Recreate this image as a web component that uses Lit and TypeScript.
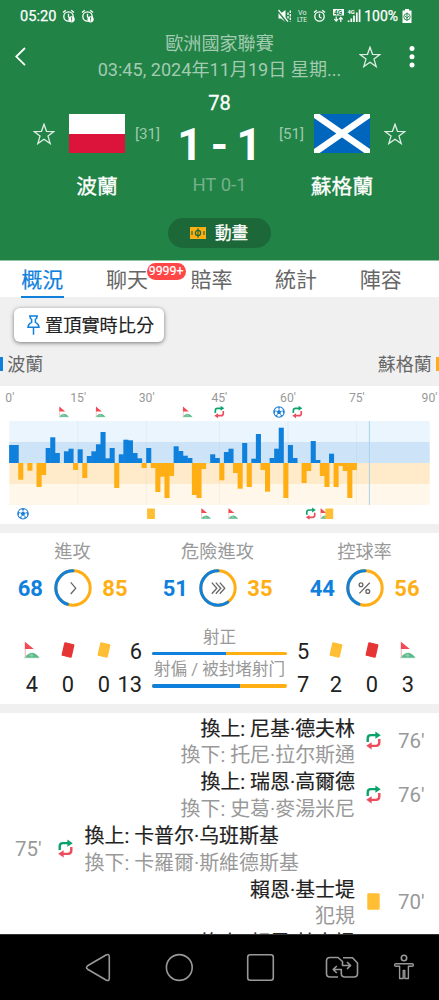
import { LitElement, html, svg, css } from "lit";
import { customElement, property } from "lit/decorators.js";

const BLUE = "#0f80dc";
const AMBER = "#ffae13";

/* Pressure per minute slot: positive is the home side, negative the away side. */
const PRESSURE = [
  18, 18, -16.7, 0, -7.7, 0, -24, -12, 15, 25.7, 10, 0, 11.7, 14.3, -7, 13.7, -15,
  7, 11.7, 18.7, 31, 4.7, 15, -25, 8.7, 23.3, 22.7, 10, 4.7, -5, 15, -5, -29,
  -13.7, -35, -13, 16.7, 12, 7.3, 5, -32, -35, -6, 0, 8.7, 5, -17.3, 11, 14.3,
  -10, -25.7, 20, -24, 4.3, 29, -7, -28.7, 5, 14.3, 35.3, -35, 18, 5, 0, -20,
  -8, 22, 3, -13, -24, 9.3, -24, -3, -8, -35, -7,
];
const SLOT = 4.57;

type Kind = "flag" | "swap" | "ball" | "yellow" | "red";
const MARKERS: [Kind, number, number][] = [
  ["flag", 64, 412], ["flag", 100.6, 412], ["flag", 187.6, 412],
  ["swap", 219.3, 412], ["ball", 279, 412], ["swap", 297.3, 412],
  ["ball", 23, 513.7], ["yellow", 151, 513.7], ["flag", 206, 513.7],
  ["flag", 233.2, 513.7], ["swap", 310.8, 513.7], ["flag", 325.3, 513.7],
  ["yellow", 329.3, 513.7],
];
const TICKS: [string, number][] = [
  ["0'", 9.8], ["15'", 78.2], ["30'", 146.7], ["45'", 219.3],
  ["60'", 288], ["75'", 356.8], ["90'", 429.5],
];

const flag = () => svg`
  <path d="M2 20 L4.5 16.5 L12 14.2 L19.6 20 Z" fill="#a9dcc2"/>
  <path d="M3.6 19.2 Q10.5 8.6 19.2 19.2 Z" fill="#5cb98a"/>
  <path d="M7.5 16.5 l3 -1.6 2.3 1.8 -2 1.9z" fill="#8ccdac"/>
  <path d="M3.6 2.4 V19" stroke="#f2b6ba" stroke-width="1.2"/>
  <path d="M3.2 1.8 L13 10 H3.2 Z" fill="#f14b55"/>`;
const swap = () => svg`
  <path d="M4.3 12.6 V8.6 Q4.3 4.8 8 4.8 H14" fill="none" stroke="#0ba26c" stroke-width="2.8"/>
  <path d="M13.2 .6 L19.4 4.8 L13.2 9 Z" fill="#0ba26c"/>
  <path d="M17.7 9.4 V13.4 Q17.7 17.2 14 17.2 H8" fill="none" stroke="#ec4c5c" stroke-width="2.8"/>
  <path d="M8.8 13 L2.6 17.2 L8.8 21.4 Z" fill="#ec4c5c"/>`;
const ball = () => svg`
  <circle cx="11" cy="11" r="9.6" fill="#fff" stroke="#1b7fd6" stroke-width="1.9"/>
  <path d="M11 7 L15 9.9 L13.5 14.6 H8.5 L7 9.9 Z" fill="#1b7fd6"/>
  <path d="M11 7 V3 M15 9.9 L19 8.5 M13.5 14.6 L16 18 M8.5 14.6 L6 18 M7 9.9 L3 8.5" stroke="#1b7fd6" stroke-width="1.5"/>
  <path d="M7.2 2.2 L11 4.6 L14.8 2.2z M1.8 8 L4.2 9.4 L3.4 13.8 L1.6 13z M20.2 8 L17.8 9.4 L18.6 13.8 L20.4 13z M4.6 17 L8 16.8 L8.6 20z M17.4 17 L14 16.8 L13.4 20z" fill="#1b7fd6"/>`;
const card = (fill: string) => svg`<rect x="3.8" y="1.4" width="14.4" height="19.2" rx="1.4" fill=${fill}/>`;
const glyph = (k: Kind) =>
  k === "flag" ? flag() : k === "swap" ? swap() : k === "ball" ? ball() : card(k === "red" ? "#e53535" : "#ffbe33");

@customElement("event-icon")
class EventIcon extends LitElement {
  @property() kind: Kind = "swap";
  @property({ type: Number }) size = 19;
  static styles = css`:host { display: inline-flex } svg { display: block }`;
  render() {
    return html`<svg width=${this.size} height=${this.size} viewBox="0 0 22 22">${glyph(this.kind)}</svg>`;
  }
}

@customElement("stat-ring")
class StatRing extends LitElement {
  @property() label = "";
  @property() icon = "";
  @property({ type: Number }) home = 0;
  @property({ type: Number }) away = 0;
  static styles = css`
    :host { display: flex; flex-direction: column; align-items: center; width: 145px; flex: none }
    .label { height: 34.5px; line-height: 37px; font-size: 18.2px; color: #999; white-space: nowrap }
    .row { display: flex; align-items: center; gap: 10.8px; height: 41px; font-size: 22px; font-weight: 700 }
    span { padding-top: 1px }
    .home { color: #0f80dc; width: 25px; text-align: right }
    .away { color: #ffae13; width: 25px }
    svg { display: block }
  `;
  render() {
    const r = 17.2;
    const c = 2 * Math.PI * r;
    const part = (this.home / (this.home + this.away)) * c;
    const icon =
      this.icon === "one" ? svg`<path d="M16.7 13.4 L21.7 19.2 L16.7 25"/>`
      : this.icon === "three"
        ? svg`<path d="M12.8 13.6 L17.8 19.2 L12.8 24.8 M16.8 13.6 L21.8 19.2 L16.8 24.8 M20.8 13.6 L25.8 19.2 L20.8 24.8"/>`
        : svg`<circle cx="15" cy="15.8" r="1.9"/><circle cx="21.8" cy="22.4" r="1.9"/><path d="M23.8 13.8 L13.4 24.4"/>`;
    return html`
      <div class="label">${this.label}</div>
      <div class="row">
        <span class="home">${this.home}</span>
        <svg width="38" height="38" viewBox="0 0 38 38" fill="none">
          <circle cx="19" cy="19" r=${r} stroke=${AMBER} stroke-width="3"/>
          <circle cx="19" cy="19" r=${r} stroke=${BLUE} stroke-width="3" stroke-linecap="round"
            stroke-dasharray="${part} ${c}" transform="matrix(0 -1 -1 0 38 38)"/>
          <g stroke="#666" stroke-width="1.3">${icon}</g>
        </svg>
        <span class="away">${this.away}</span>
      </div>`;
  }
}

@customElement("pressure-chart")
class PressureChart extends LitElement {
  static styles = css`
    :host { display: block; height: 138px; background: #fff }
    svg { display: block }
    text { font-size: 12.2px; fill: #999; text-anchor: middle }
  `;
  render() {
    return html`<svg width="439" height="138" viewBox="0 386 439 138">
      ${TICKS.map(([t, x]) => svg`<text x=${x} y="402.3">${t}</text>`)}
      <rect x="9.3" y="421" width="420.4" height="21" fill="#eaf5fd"/>
      <rect x="9.3" y="442" width="420.4" height="21" fill="#cce3f8"/>
      <rect x="9.3" y="463" width="420.4" height="21" fill="#ffebc9"/>
      <rect x="9.3" y="484" width="420.4" height="21" fill="#fff7e9"/>
      ${[77.8, 146.4, 219.5, 288, 356.6].map((x) => svg`<path d="M${x} 421 V505" stroke="#8899aa" stroke-opacity=".08"/>`)}
      ${PRESSURE.map((v, i) => v === 0 ? null : svg`
        <rect x=${9.3 + SLOT * i - 0.2} y=${v > 0 ? 463 - v : 463} width=${SLOT + 0.5} height=${Math.abs(v)}
          fill=${v > 0 ? BLUE : AMBER}/>`)}
      <path d="M369.4 421 V505" stroke="#a9d2ee" stroke-width="1"/>
      ${MARKERS.map(([k, x, y]) => {
        const s = k === "flag" || k === "swap" ? 13 : 12;
        return svg`<g transform="translate(${x - s / 2} ${y - s / 2}) scale(${s / 22})">${glyph(k)}</g>`;
      })}
    </svg>`;
  }
}

@customElement("match-event")
class MatchEvent extends LitElement {
  @property() side = "away";
  @property() main = "";
  @property() sub = "";
  @property() minute = "";
  @property() kind: Kind = "swap";
  static styles = css`
    :host { display: block; height: 53.7px; flex: none }
    .row { display: flex; height: 100%; align-items: center; padding: 0 14px 0 15px; flex-direction: row }
    .away { flex-direction: row-reverse; text-align: right }
    .minute { width: 41px; font-size: 20.5px; color: #999; flex: none; text-align: left; padding-top: 1px }
    .away .minute { width: 27px; margin-left: 14px; padding-left: 1px }
    event-icon { margin-right: 9.5px; flex: none }
    .away event-icon { margin-right: 0; margin-left: 9px }
    .text { font-size: 19.95px; line-height: 26.8px; white-space: nowrap; height: 53.6px; margin-top: 3px }
    .main { color: #222; -webkit-text-stroke: .2px #222 }
    .sub { color: #999 }
  `;
  render() {
    return html`<div class="row ${this.side}">
      <div class="minute">${this.minute}</div>
      <event-icon .kind=${this.kind}></event-icon>
      <div class="text"><div class="main">${this.main}</div><div class="sub">${this.sub}</div></div>
    </div>`;
  }
}

const star = html`<svg width="22" height="22" viewBox="0 0 22 22" fill="none" stroke="#dfeee4" stroke-width="1.3">
  <path d="M11 1.2 L13.5 8.3 L21 8.5 L15 13.1 L17.2 20.6 L11 16.3 L4.8 20.6 L7 13.1 L1 8.5 L8.5 8.3 Z"/></svg>`;
const alarmBody = svg`<circle cx="6.5" cy="7.5" r="4.7"/><path d="M6.5 4.8 V8 L8.6 9.3 M1 3.6 L3.8 1.2 M12 3.6 L9.2 1.2"/>`;
const alarmAlert = html`<svg width="13" height="14" viewBox="0 0 13 14" fill="none" stroke="#fff" stroke-width="1.3">
  ${alarmBody}<circle cx="9.6" cy="10.3" r="3.1" fill="#fff" stroke="none"/><path d="M9.6 8.3 V10.8 M9.6 11.5 V12.4" stroke="#218346" stroke-width="1"/></svg>`;

@customElement("app-root")
class AppRoot extends LitElement {
  static styles = css`
    :host {
      display: flex; flex-direction: column; width: 439px; height: 1000px; overflow: hidden;
      background: #fff; font-family: Roboto, "Noto Sans CJK TC", sans-serif;
    }
    * { box-sizing: border-box }
    svg { display: block; flex: none }
    header { height: 260px; flex: none; background: #218346; color: #fff; display: flex; flex-direction: column }
    .status { height: 32px; display: flex; align-items: center; padding: 0 27px 0 20px; font-size: 14px; -webkit-text-stroke: .25px #fff; flex: none }
    .clock { margin-right: 6px; font-size: 14.6px }
    .alarms { display: flex; gap: 6px; flex: 1 }
    .sysicons { margin-right: 3px; -webkit-text-stroke: 0 }
    .battery { margin-left: 4px }
    .bar { height: 58px; display: grid; grid-template-columns: 95px 249px 1fr; flex: none }
    .back { padding: 14px 0 0 14px }
    .title { text-align: center; color: #a3cbb1; font-size: 18.1px; line-height: 26px; white-space: nowrap; margin-top: -1px }
    .title div { height: 26px }
    .actions { display: flex; padding: 14px 0 0 15px; gap: 28px }
    .minute { height: 26px; line-height: 26px; font-size: 20px; -webkit-text-stroke: .3px #fff; text-align: center; flex: none }
    .teams { display: flex; justify-content: center; height: 92px; flex: none }
    .team { width: 175px; display: grid; grid-template-columns: 36px 56px 36px; grid-template-rows: 36px 66px; align-items: center; justify-content: start; flex: none }
    .team.home { padding-left: 33px }
    .team.away { grid-template-columns: 35px 56px 36px; padding-left: 15px }
    .rank { font-size: 15.2px; color: #9cc9ac; text-align: right; white-space: nowrap; line-height: 18px }
    .home .rank { padding-right: 1px }
    .away .rank { text-align: left }
    .away .star { padding-left: 14px }
    .flagpic { height: 39px; align-self: start; margin-top: -2px }
    .name { grid-column: 2; justify-self: center; font-size: 20.8px; -webkit-text-stroke: .3px #fff; white-space: nowrap }
    .mid { width: 89px; text-align: center; flex: none }
    .score { font-size: 44px; font-weight: 700; line-height: 58px; height: 58px; white-space: nowrap; margin: 0 -5px; word-spacing: -2.5px }
    .ht { font-size: 18.5px; line-height: 22px; color: #74b189 }
    .pillrow { display: flex; justify-content: center; padding-top: 10px }
    .pill { width: 103px; height: 30px; border-radius: 15px; background: #1c6838; display: flex; align-items: center; padding-left: 22px; gap: 9px; font-size: 16.6px; -webkit-text-stroke: .3px #fff }
    .pill span { margin-top: -2px }
    .tabs { height: 37px; flex: none; display: flex; border-top: 1px solid #91c3a3; background: #fff; color: #666; font-size: 21px; line-height: 38px }
    .tab { width: 84.6px; display: flex; justify-content: center; position: relative; flex: none; white-space: nowrap }
    .tab.on { color: #0f80dc; -webkit-text-stroke: .2px #0f80dc }
    .tab.on::after { content: ""; position: absolute; left: 21px; right: 21px; top: 34.5px; height: 2.5px; background: #0f80dc }
    .badge { position: absolute; left: 62px; top: 2px; width: 39px; height: 17px; border-radius: 8.5px; background: #ff4747; color: #fff; font-size: 12.3px; line-height: 17.5px; text-align: center; -webkit-text-stroke: .2px #fff }
    .grey { height: 89px; flex: none; background: #f0f0f0; display: flex; flex-direction: column; padding-top: 11px }
    .pin { margin-left: 14px; width: 150px; height: 34px; border-radius: 6px; background: #fff; box-shadow: 0 1px 4px rgba(0,0,0,.5); display: flex; align-items: center; padding-left: 13px; gap: 5px; font-size: 18.2px; color: #222; white-space: nowrap; -webkit-text-stroke: .15px #222 }
    .pin span { margin-top: -2px }
    .sides { display: flex; justify-content: space-between; margin-top: 7px; height: 28px; align-items: center; font-size: 18px; color: #666 }
    .side { display: flex; align-items: center; gap: 4.5px }
    .stripe { width: 2.7px; height: 14px; background: #0f80dc; margin-top: 1px }
    .stripe.amber { background: #ffae13 }
    .gap { height: 9px; flex: none; background: #f0f0f0 }
    .stats { height: 171px; flex: none; display: flex; flex-direction: column }
    .rings { display: flex; height: 85px; width: 439px }
    .rings stat-ring:last-child { margin-left: 2px }
    .table { flex: 1; padding: 15px 0 0 14px; display: flex }
    .col { width: 36px; flex: none; display: flex; flex-direction: column; align-items: center; font-size: 21.8px; color: #222 }
    .col.end { align-items: flex-end; width: 20px; white-space: nowrap }
    .col.start { align-items: flex-start; width: 21px }
    .cell { height: 33px; display: flex; align-items: center }
    .num { padding-top: 4px }
    .tilt { transform: rotate(13deg) }
    .bars { width: 135px; margin: -8px 10px 0; flex: none }
    .barlabel { font-size: 16.6px; color: #999; height: 20.5px; line-height: 25px; text-align: center; white-space: nowrap; margin: 0 -5px }
    .meter { height: 3.6px; border-radius: 2px; background: #ffae13; overflow: hidden; margin: 6px 0 2.4px }
    .fill { height: 100%; background: #0f80dc }
    .events { height: 221px; flex: none; overflow: hidden; display: flex; flex-direction: column; padding-top: 1px }
    nav { height: 66px; flex: none; background: #000; border-top: 1px solid #333 }
  `;

  meter(label: string, home: number, away: number) {
    return html`<div class="barlabel">${label}</div>
      <div class="meter"><div class="fill" style="width:${(home / (home + away)) * 100}%"></div></div>`;
  }

  col(kind: Kind, n: number) {
    return html`<div class="col">
      <div class="cell"><event-icon class=${kind === "flag" ? "" : "tilt"} .kind=${kind} .size=${kind === "flag" ? 20 : 16}></event-icon></div>
      <div class="cell num">${n}</div></div>`;
  }

  render() {
    return html`
      <header>
        <div class="status">
          <span class="clock">05:20</span>
          <span class="alarms">${alarmAlert}${alarmAlert}</span>
          <svg class="sysicons" width="84" height="16" viewBox="278 8 84 16" fill="none" stroke="#fff" stroke-width="1.3">
            <path d="M279.5 13.3 H282 L286.5 10 V22 L282 18.5 H279.5 Z" fill="#fff" stroke="none"/>
            <path d="M279 10.5 L287.5 21.5" stroke="#218346" stroke-width="2.4"/><path d="M279.5 10 L289 21.6" />
            <path d="M289 12.5 V19.5 M291.3 10.5 V21.5" stroke-dasharray="2.5 1"/>
            <g fill="#e3f0e8" stroke="none" font-size="7.2"><text x="299" y="15">Vo</text><text x="298" y="22.2" font-size="6.6" textLength="10">LTE</text></g>
            <g transform="translate(314 9)">${alarmBody}</g>
            <rect x="334" y="9" width="11" height="6.5" fill="#fff" stroke="none"/>
            <text x="335" y="14.8" fill="#218346" stroke="none" font-size="6.5" font-weight="700">4G</text>
            <path d="M337.2 16.5 V21 M335.3 19.2 L337.2 21.2 L339.1 19.2 M341.8 22 V17.5 M339.9 19.3 L341.8 17.3 L343.7 19.3" stroke-width="1.2"/>
            <text x="348.5" y="14" fill="#fff" stroke="none" font-size="5.8" font-weight="700">4G</text>
            <path d="M349.6 20.5 V22 M352.3 18.5 V22 M355 15.5 V22 M357.8 12.5 V22 M360.6 9.5 V22" stroke-width="1.7"/>
          </svg>
          <span>100%</span>
          <svg class="battery" width="10" height="14" viewBox="0 0 10 14"><path d="M3 0 H7 V1.5 H9.5 V14 H.5 V1.5 H3 Z" fill="#fff"/>
            <circle cx="5" cy="7.8" r="3.2" fill="none" stroke="#218346" stroke-width=".9"/><path d="M5 3.5 V12 M3 7 L5 9 L7 7" fill="none" stroke="#218346" stroke-width=".9"/></svg>
        </div>
        <div class="bar">
          <div class="back"><svg width="14" height="21" viewBox="0 0 14 21" fill="none" stroke="#fff" stroke-width="1.8"><path d="M11 2 L2.3 10.6 L11 19.2"/></svg></div>
          <div class="title"><div>歐洲國家聯賽</div><div>03:45, 2024年11月19日 星期...</div></div>
          <div class="actions">${star}
            <svg width="6" height="22" viewBox="0 0 6 22" fill="#fff"><circle cx="3" cy="2.6" r="2.5"/><circle cx="3" cy="10.8" r="2.5"/><circle cx="3" cy="19" r="2.5"/></svg>
          </div>
        </div>
        <div class="minute">78</div>
        <div class="teams">
          <div class="team home">
            <div class="star">${star}</div>
            <svg class="flagpic" width="56" height="39" viewBox="0 0 56 39"><path fill="#fff" d="M0 0h56v20H0z"/><path fill="#dc143c" d="M0 20h56v19H0z"/></svg>
            <div class="rank">[31]</div>
            <div class="name">波蘭</div>
          </div>
          <div class="mid"><div class="score">1 - 1</div><div class="ht">HT 0-1</div></div>
          <div class="team away">
            <div class="rank">[51]</div>
            <svg class="flagpic" width="56" height="39" viewBox="0 0 56 39"><path fill="#0065bd" d="M0 0h56v39H0z"/><path stroke="#fff" stroke-width="6.4" d="M0 0L56 39M56 0L0 39"/></svg>
            <div class="star">${star}</div>
            <div class="name">蘇格蘭</div>
          </div>
        </div>
        <div class="pillrow"><div class="pill">
          <svg width="16" height="12" viewBox="0 0 16 12" fill="none" stroke="#1c6838"><rect width="16" height="12" fill="#ffae13" stroke="none"/><circle cx="8" cy="6" r="2.6" stroke-width="1.2"/><path d="M8 1.3 V10.7 M2 4 V8 M14 4 V8" stroke-width="1.1"/></svg>
          <span>動畫</span></div></div>
      </header>
      <div class="tabs">
        <div class="tab on">概況</div>
        <div class="tab">聊天<span class="badge">9999+</span></div>
        <div class="tab">賠率</div><div class="tab">統計</div><div class="tab">陣容</div>
      </div>
      <div class="grey">
        <div class="pin">
          <svg width="13" height="20" viewBox="0 0 13 20" fill="none" stroke="#0f80dc" stroke-width="1.5"><path d="M2 1 H11 M3.3 1 V3.2 L4.6 4.3 V7.4 Q1.2 9 1 12.3 H12 Q11.8 9 8.4 7.4 V4.3 L9.7 3.2 V1 M6.5 12.3 V19.8"/></svg>
          <span>置頂實時比分</span>
        </div>
        <div class="sides">
          <div class="side"><i class="stripe"></i><span>波蘭</span></div>
          <div class="side"><span>蘇格蘭</span><i class="stripe amber"></i></div>
        </div>
      </div>
      <pressure-chart></pressure-chart>
      <div class="gap"></div>
      <div class="stats">
        <div class="rings">
          <stat-ring label="進攻" icon="one" .home=${68} .away=${85}></stat-ring>
          <stat-ring label="危險進攻" icon="three" .home=${51} .away=${35}></stat-ring>
          <stat-ring label="控球率" icon="pct" .home=${44} .away=${56}></stat-ring>
        </div>
        <div class="table">
          ${this.col("flag", 4)}${this.col("red", 0)}${this.col("yellow", 0)}
          <div class="col end"><div class="cell num">6</div><div class="cell num">13</div></div>
          <div class="bars">${this.meter("射正", 6, 5)}${this.meter("射偏 / 被封堵射门", 13, 7)}</div>
          <div class="col start"><div class="cell num">5</div><div class="cell num">7</div></div>
          ${this.col("yellow", 2)}${this.col("red", 0)}${this.col("flag", 3)}
        </div>
      </div>
      <div class="gap"></div>
      <div class="events">
        <match-event main="換上: 尼基·德夫林" sub="換下: 托尼·拉尔斯通" minute="76'"></match-event>
        <match-event main="換上: 瑞恩·高爾德" sub="換下: 史葛·麥湯米尼" minute="76'"></match-event>
        <match-event side="home" main="換上: 卡普尔·乌班斯基" sub="換下: 卡羅爾·斯維德斯基" minute="75'"></match-event>
        <match-event kind="yellow" main="賴恩·基士堤" sub="犯規" minute="70'"></match-event>
        <match-event main="換上: 賴恩·基士堤"></match-event>
      </div>
      <nav>
        <svg width="439" height="65" viewBox="0 935 439 65" fill="none" stroke="#999" stroke-width="1.6" stroke-linejoin="round">
          <path d="M87.6 965.8 L106 955 Q109.3 953.3 109.3 957 V978 Q109.3 981.7 106 980 L87.6 969.2 Q85.4 967.5 87.6 965.8 Z"/>
          <circle cx="179.3" cy="967.5" r="12.9"/>
          <rect x="247.7" y="954.7" width="25.6" height="25.6" rx="2.5"/>
          <path d="M338 977 H330 Q326.5 977 326.5 973.5 V961 Q326.5 957.5 330 957.5 H338 L342.5 961.5 V965.5 H350 M347 962 L350.6 965.5 L347 969"/>
          <path d="M343 957.8 H352.5 L357.5 963 V973.5 Q357.5 977 354 977 H345 Q341.3 977 341.3 973.5 V969.5 H333.3 M336.8 966 L333.2 969.5 L336.8 973"/>
          <circle cx="404" cy="958" r="2.7"/>
          <path d="M396 963.8 H412 Q413.4 963.8 413.4 965 T412 966.3 H408.4 V978.5 H404.8 V970.5 H403.2 V978.5 H399.6 V966.3 H396 Q394.6 966.3 394.6 965 T396 963.8 Z" stroke-width="1.4"/>
        </svg>
      </nav>`;
  }
}
